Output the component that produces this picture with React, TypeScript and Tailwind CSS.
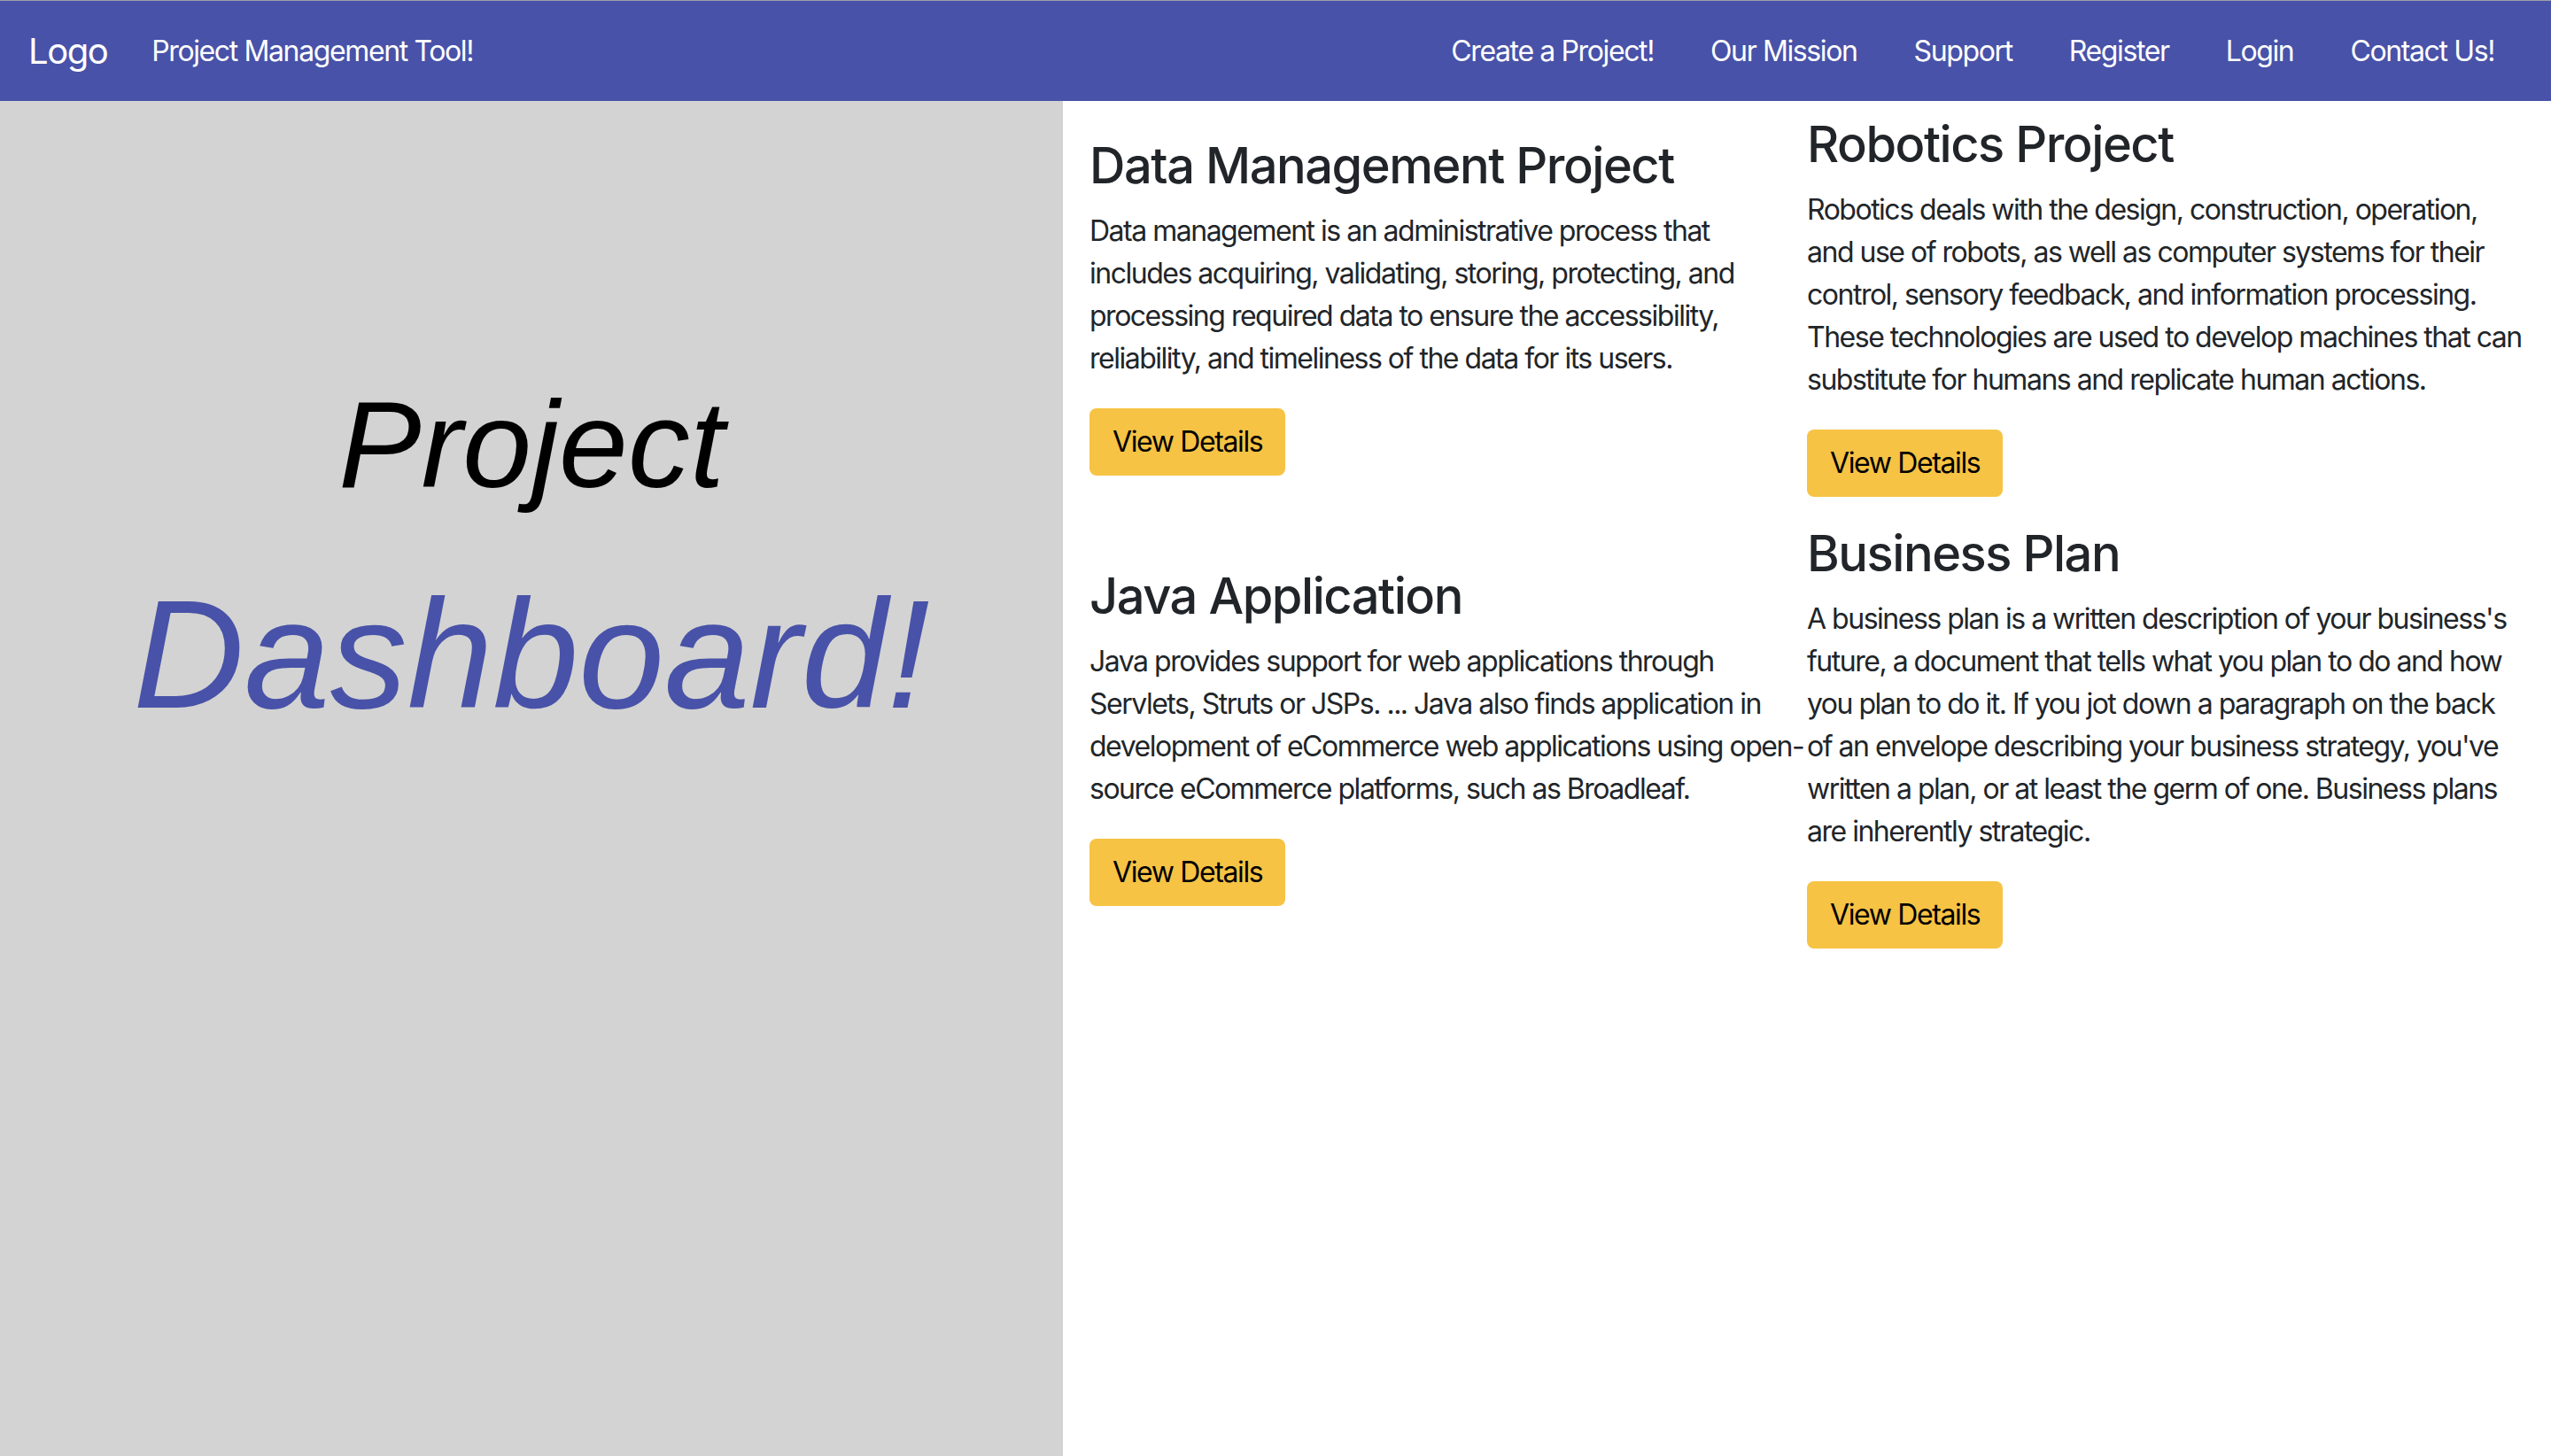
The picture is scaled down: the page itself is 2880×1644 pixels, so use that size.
import React from 'react';

const projects = [
  {
    title: 'Data Management Project',
    text: 'Data management is an administrative process that includes acquiring, validating, storing, protecting, and processing required data to ensure the accessibility, reliability, and timeliness of the data for its users.',
  },
  {
    title: 'Robotics Project',
    text: 'Robotics deals with the design, construction, operation, and use of robots, as well as computer systems for their control, sensory feedback, and information processing. These technologies are used to develop machines that can substitute for humans and replicate human actions.',
  },
  {
    title: 'Java Application',
    text: 'Java provides support for web applications through Servlets, Struts or JSPs. ... Java also finds application in development of eCommerce web applications using open-source eCommerce platforms, such as Broadleaf.',
  },
  {
    title: 'Business Plan',
    text: "A business plan is a written description of your business's future, a document that tells what you plan to do and how you plan to do it. If you jot down a paragraph on the back of an envelope describing your business strategy, you've written a plan, or at least the germ of one. Business plans are inherently strategic.",
  },
];

const links = ['Create a Project!', 'Our Mission', 'Support', 'Register', 'Login', 'Contact Us!'];

const ProjectCard: React.FC<{ title: string; text: string }> = ({ title, text }) => (
  <div className="text-[#212529]">
    <h3 className="text-[56px] leading-[1.2] font-medium tracking-[-0.026em] mb-[16px]">{title}</h3>
    <p className="text-[32px] leading-[48px] tracking-[-1.49px] mb-[32px]">{text}</p>
    <button className="bg-[#f6c344] text-black text-[32px] leading-[48px] tracking-[-0.043em] px-[26px] py-[14px] rounded-[8px]">
      View Details
    </button>
  </div>
);

const App: React.FC = () => {
  return (
    <div className="min-h-screen flex flex-col font-['Inter','Noto_Sans',sans-serif]">
      <nav className="h-[114px] border-t border-[#a0a0a8] bg-[#4852a8] text-white flex items-center pl-[32px] pr-[32px]">
        <span className="text-[40px] leading-[60px] tracking-[-0.037em]">Logo</span>
        <a className="text-[32px] leading-[48px] tracking-[-0.043em] ml-[50px]">Project Management Tool!</a>
        <div className="ml-auto flex">
          {links.map((l) => (
            <a key={l} className="text-[32px] leading-[48px] tracking-[-0.043em] px-[32px]">
              {l}
            </a>
          ))}
        </div>
      </nav>

      <div className="flex flex-1">
        <div className="w-[1200px] bg-[#d3d3d3] flex flex-col items-center pt-[318px] font-['Liberation_Sans',Arial,sans-serif] italic">
          <h1 className="text-[140px] leading-none text-black">Project</h1>
          <h1 className="text-[174px] leading-none text-[#4852a8] mt-[80px]">Dashboard!</h1>
        </div>

        <div className="flex-1 bg-white px-[30px] pt-[16px]">
          <div className="grid grid-cols-2 items-center gap-y-[31px]">
            {projects.map((p) => (
              <ProjectCard key={p.title} title={p.title} text={p.text} />
            ))}
          </div>
        </div>
      </div>
    </div>
  );
};

export default App;
